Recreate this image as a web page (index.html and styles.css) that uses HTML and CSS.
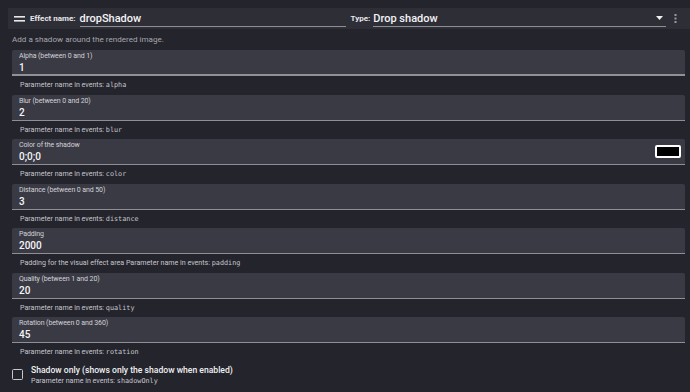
FILE: index.html
```html
<!DOCTYPE html>
<html>
<head>
<meta charset="utf-8">
<link rel="stylesheet" href="styles.css">
</head>
<body>
<div class="header">
  <svg class="drag" width="11" height="6" viewBox="0 0 11 6"><rect x="0" y="0" width="11" height="1.6" fill="#e8e8ec"/><rect x="0" y="4" width="11" height="1.6" fill="#e8e8ec"/></svg>
  <span class="hlabel">Effect name:</span>
  <div class="hinput name"><span>dropShadow</span></div>
  <span class="hlabel type">Type:</span>
  <div class="hinput select"><span>Drop shadow</span>
    <svg class="arrow" width="7" height="4" viewBox="0 0 7 4"><path d="M0 0 H7 L3.5 4 Z" fill="#f0f0f0"/></svg>
  </div>
  <svg class="kebab" width="3" height="9" viewBox="0 0 3 9"><rect x="0.5" y="0" width="2" height="2" fill="#9a9aa2"/><rect x="0.5" y="3.5" width="2" height="2" fill="#9a9aa2"/><rect x="0.5" y="7" width="2" height="2" fill="#9a9aa2"/></svg>
</div>
<div class="content">
  <p class="desc">Add a shadow around the rendered image.</p>

  <div class="field focused"><div class="flabel">Alpha (between 0 and 1)</div><div class="fvalue">1</div></div>
  <p class="help">Parameter name in events: <code>alpha</code></p>

  <div class="field"><div class="flabel">Blur (between 0 and 20)</div><div class="fvalue">2</div></div>
  <p class="help">Parameter name in events: <code>blur</code></p>

  <div class="field color"><div class="fcol"><div class="flabel">Color of the shadow</div><div class="fvalue">0;0;0</div></div><div class="swatch"></div></div>
  <p class="help">Parameter name in events: <code>color</code></p>

  <div class="field"><div class="flabel">Distance (between 0 and 50)</div><div class="fvalue">3</div></div>
  <p class="help">Parameter name in events: <code>distance</code></p>

  <div class="field"><div class="flabel">Padding</div><div class="fvalue">2000</div></div>
  <p class="help">Padding for the visual effect area Parameter name in events: <code>padding</code></p>

  <div class="field"><div class="flabel">Quality (between 1 and 20)</div><div class="fvalue">20</div></div>
  <p class="help">Parameter name in events: <code>quality</code></p>

  <div class="field"><div class="flabel">Rotation (between 0 and 360)</div><div class="fvalue">45</div></div>
  <p class="help">Parameter name in events: <code>rotation</code></p>

  <div class="check">
    <div class="box"></div>
    <div class="ctext">
      <div class="clabel">Shadow only (shows only the shadow when enabled)</div>
      <div class="chelp">Parameter name in events: <code>shadowOnly</code></div>
    </div>
  </div>
</div>
</body>
</html>
```
FILE: styles.css
```css
html, body {
  background: #24242c;
}
body {
  margin: 8px 0 0 8px;
  font-family: Roboto, "Noto Sans", sans-serif;
  color: #f0f0f2;
}
.header {
  height: 21px;
  background: #2e2e37;
  display: flex;
  align-items: center;
  padding-left: 6px;
}
.header > * { flex-shrink: 0; white-space: nowrap; }
.drag { margin-right: 5px; }
.hlabel {
  font-size: 8px;
  font-weight: 700;
  color: #e6e6ea;
  margin-right: 4px;
}
.hlabel.type { margin-left: 5px; margin-right: 3px; }
.hinput {
  height: 16px;
  border-bottom: 1px solid #8d8d93;
  display: flex;
  align-items: center;
  font-size: 11px;
  font-weight: 500;
  color: #f4f4f6;
}
.name { width: 266px; }
.select { width: 293px; justify-content: space-between; }
.arrow { margin-right: 3px; }
.kebab { margin-left: 8px; }
.content {
  padding: 0 5px 0 4px;
}
.desc {
  margin: 0;
  height: 21px;
  line-height: 21px;
  font-size: 8.1px;
  color: #a6a6ae;
}
.field {
  height: 25px;
  background: #3a3a44;
  border-radius: 2px 2px 0 0;
  border-bottom: 1px solid #8e8e94;
  padding: 0 7px;
  display: flex;
  flex-direction: column;
  justify-content: center;
}
.field.focused { border-bottom: 2px solid #909096; height: 24px; }
.field.color {
  flex-direction: row;
  align-items: center;
  justify-content: space-between;
  padding-right: 4px;
}
.flabel {
  font-size: 7px;
  line-height: 10px;
  letter-spacing: -0.1px;
  color: #d2d2d8;
}
.fvalue {
  font-size: 10px;
  line-height: 13px;
  font-weight: 500;
  color: #f6f6f8;
}
.swatch {
  width: 22px;
  height: 9px;
  background: #000;
  border: 2px solid #fff;
  border-radius: 2px;
}
.help {
  margin: 0;
  height: 18.5px;
  line-height: 17px;
  padding-left: 8px;
  font-size: 7.1px;
  color: #c6c6cc;
}
code {
  font-family: "DejaVu Sans Mono", monospace;
  font-size: 6.8px;
}
.check {
  display: flex;
  align-items: center;
  margin-top: 2px;
}
.box {
  width: 9px;
  height: 9px;
  border: 1.5px solid #c8c8cc;
  border-radius: 1.5px;
  margin-right: 8px;
}
.clabel {
  font-size: 8.6px;
  font-weight: 500;
  color: #f0f0f2;
  line-height: 12px;
}
.chelp {
  font-size: 7.1px;
  color: #c6c6cc;
  line-height: 10px;
}
```
